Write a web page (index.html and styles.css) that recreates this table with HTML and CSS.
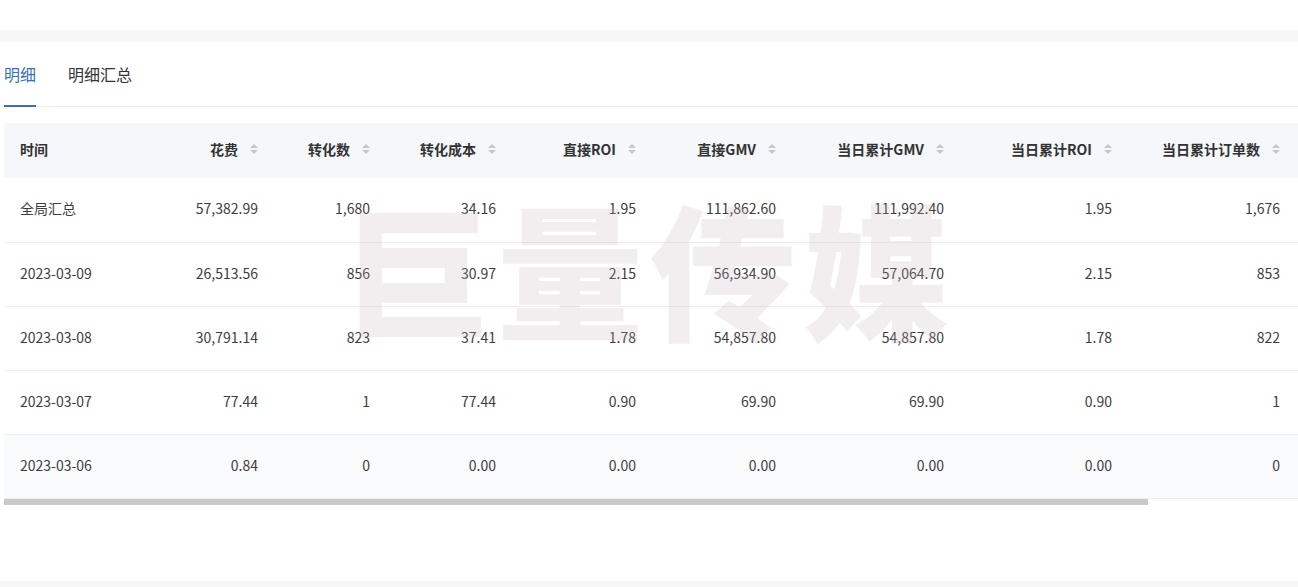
FILE: index.html
```html
<!DOCTYPE html>
<html lang="zh-CN">
<head>
<meta charset="utf-8">
<title>明细</title>
<link rel="stylesheet" href="styles.css">
</head>
<body>
<div class="top"></div>
<div class="band"></div>
<div class="panel">
  <div class="tabs">
    <div class="tab active">明细</div>
    <div class="tab">明细汇总</div>
  </div>
  <div class="table-wrap">
    <div class="scroller">
      <table class="grid">
        <colgroup>
          <col class="c1"><col class="c2"><col class="c3"><col class="c4"><col class="c5"><col class="c6"><col class="c7"><col class="c8"><col class="c9"><col class="c10">
        </colgroup>
        <thead>
          <tr>
            <th class="left">时间</th>
            <th><span class="th">花费<i class="sort"></i></span></th>
            <th><span class="th">转化数<i class="sort"></i></span></th>
            <th><span class="th">转化成本<i class="sort"></i></span></th>
            <th><span class="th">直接ROI<i class="sort"></i></span></th>
            <th><span class="th">直接GMV<i class="sort"></i></span></th>
            <th><span class="th">当日累计GMV<i class="sort"></i></span></th>
            <th><span class="th">当日累计ROI<i class="sort"></i></span></th>
            <th><span class="th">当日累计订单数<i class="sort"></i></span></th>
            <th></th>
          </tr>
        </thead>
        <tbody>
          <tr>
            <td class="left">全局汇总</td><td>57,382.99</td><td>1,680</td><td>34.16</td><td>1.95</td><td>111,862.60</td><td>111,992.40</td><td>1.95</td><td>1,676</td><td></td>
          </tr>
          <tr>
            <td class="left">2023-03-09</td><td>26,513.56</td><td>856</td><td>30.97</td><td>2.15</td><td>56,934.90</td><td>57,064.70</td><td>2.15</td><td>853</td><td></td>
          </tr>
          <tr>
            <td class="left">2023-03-08</td><td>30,791.14</td><td>823</td><td>37.41</td><td>1.78</td><td>54,857.80</td><td>54,857.80</td><td>1.78</td><td>822</td><td></td>
          </tr>
          <tr>
            <td class="left">2023-03-07</td><td>77.44</td><td>1</td><td>77.44</td><td>0.90</td><td>69.90</td><td>69.90</td><td>0.90</td><td>1</td><td></td>
          </tr>
          <tr class="hover">
            <td class="left">2023-03-06</td><td>0.84</td><td>0</td><td>0.00</td><td>0.00</td><td>0.00</td><td>0.00</td><td>0.00</td><td>0</td><td></td>
          </tr>
        </tbody>
      </table>
    </div>
    <div class="hscroll"><div class="thumb"></div></div>
    <div class="watermark" aria-hidden="true">巨量传媒</div>
  </div>
  <div class="spacer"></div>
</div>
<div class="band bottom"></div>
</body>
</html>
```
FILE: styles.css
```css
html, body {
  margin: 0;
  padding: 0;
  background: #ffffff;
  font-family: "Noto Sans CJK SC", "Noto Sans", sans-serif;
  color: #333333;
  overflow: hidden;
}

.top {
  height: 30px;
  background: #ffffff;
}

.band {
  height: 12px;
  background: #f5f6f7;
}

.band.bottom {
  height: 7px;
}

.panel {
  background: #ffffff;
  padding-left: 4px;
}

.tabs {
  display: flex;
  gap: 32px;
  height: 64px;
  border-bottom: 1px solid #ebedf0;
}

.tab {
  display: flex;
  align-items: center;
  font-size: 16px;
  color: #333333;
  margin-bottom: -1px;
  border-bottom: 2px solid transparent;
  box-sizing: border-box;
  height: 65px;
}

.tab.active {
  color: #3b6fb6;
  border-bottom-color: #3b6fb6;
}

.table-wrap {
  position: relative;
  margin-top: 16px;
}

.scroller {
  overflow: hidden;
}

.hscroll {
  height: 6px;
  background: #ffffff;
}

.thumb {
  width: 1144px;
  height: 6px;
  background: #c9c9c9;
}

.grid {
  border-collapse: collapse;
  table-layout: fixed;
  width: 1462px;
  font-size: 14px;
}

.c1 { width: 150px; }
.c2 { width: 120px; }
.c3 { width: 112px; }
.c4 { width: 126px; }
.c5 { width: 140px; }
.c6 { width: 140px; }
.c7 { width: 168px; }
.c8 { width: 168px; }
.c9 { width: 168px; }
.c10 { width: 170px; }

.grid th,
.grid td {
  box-sizing: border-box;
  line-height: 20px;
  white-space: nowrap;
  text-align: right;
}

.grid th {
  height: 55px;
  padding: 0 16px 4px 16px;
  background: #f5f7fa;
  font-weight: 700;
  color: #333333;
}

.grid td {
  height: 64px;
  padding: 0 16px 3px 16px;
  border-bottom: 1px solid #eceef2;
  color: #3d3d3d;
}

.grid th.left, .grid td.left {
  text-align: left;
}

.grid tr.hover td {
  background: #fafbfc;
}

.th {
  display: inline-flex;
  align-items: center;
  gap: 12px;
}

.sort {
  display: inline-flex;
  flex-direction: column;
  gap: 2px;
  width: 8px;
}

.sort::before,
.sort::after {
  content: "";
  width: 0;
  height: 0;
  border-left: 4px solid transparent;
  border-right: 4px solid transparent;
}

.sort::before {
  border-bottom: 4px solid #c3c7ce;
}

.sort::after {
  border-top: 4px solid #c3c7ce;
}

.watermark {
  position: absolute;
  left: 340px;
  top: 70px;
  font-size: 146px;
  line-height: 1;
  font-weight: 900;
  letter-spacing: 7px;
  color: rgba(196, 178, 184, 0.22);
  pointer-events: none;
  white-space: nowrap;
}

.spacer {
  height: 76px;
}
```
